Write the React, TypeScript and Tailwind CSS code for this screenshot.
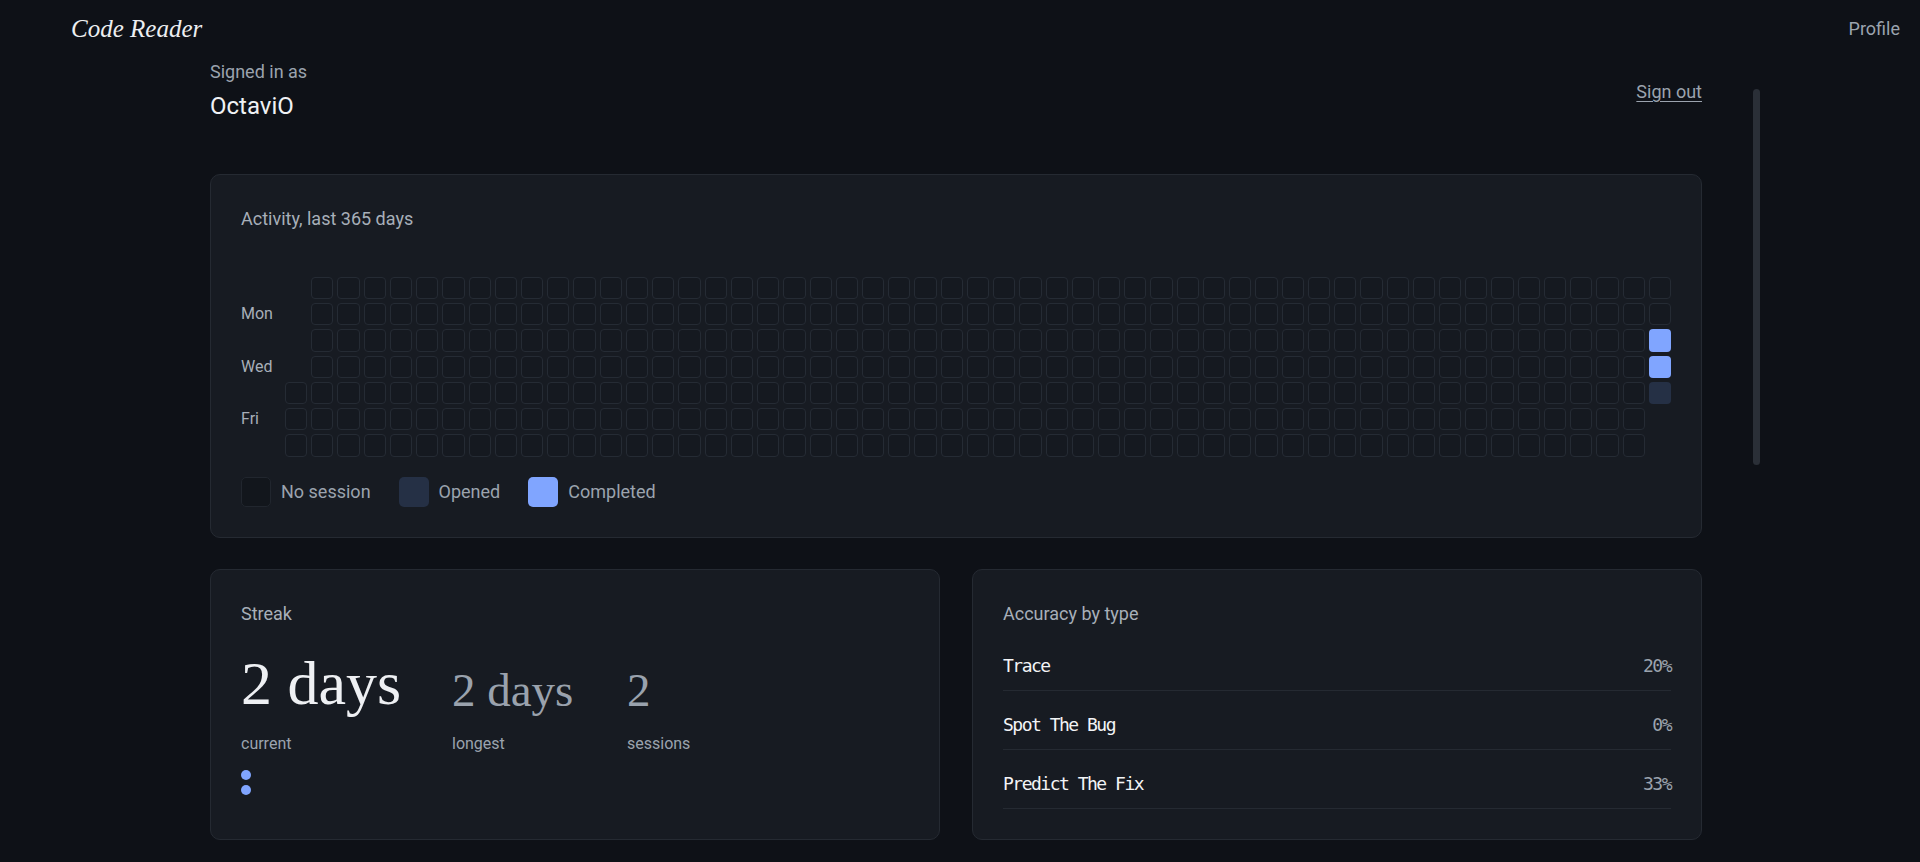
import React from 'react';

const WEEKS = 53;
const DAYS = ['', 'Mon', '', 'Wed', '', 'Fri', ''];

type Status = 'none' | 'opened' | 'completed' | 'blank';

function cellStatus(week: number, day: number): Status {
  if (week === 0 && day < 4) return 'blank';
  if (week === WEEKS - 1) {
    if (day > 4) return 'blank';
    if (day === 2 || day === 3) return 'completed';
    if (day === 4) return 'opened';
  }
  return 'none';
}

function Cell({ status }: { status: Status }) {
  if (status === 'blank') return <div className="aspect-square" />;
  if (status === 'completed') return <div className="aspect-square rounded-[4px] bg-[#80a5ff]" />;
  if (status === 'opened') return <div className="aspect-square rounded-[4px] bg-[#253045]" />;
  return <div className="aspect-square rounded-[4px] border-[1.5px] border-[#252b34] bg-[#151920]" />;
}

const accuracy = [
  { label: 'Trace', value: '20%' },
  { label: 'Spot The Bug', value: '0%' },
  { label: 'Predict The Fix', value: '33%' },
];

export default function App() {
  return (
    <div className="min-h-screen bg-[#0e1117] text-[#e6e8eb] font-['Roboto','Noto_Sans',sans-serif]">
      {/* Header */}
      <header className="flex h-[58px] items-center justify-between pl-[71px] pr-[20px]">
        <span className="font-['Liberation_Serif',serif] text-[25px] italic text-[#eceef1]">Code Reader</span>
        <a className="text-lg text-[#9ba3ae]">Profile</a>
      </header>

      <div className="flex">
        <main className="ml-[210px] w-[1492px] pb-10">
          {/* Account */}
          <div className="flex items-center justify-between">
            <div>
              <p className="text-lg leading-7 text-[#9ba3ae]">Signed in as</p>
              <p className="mt-1 text-2xl leading-8 text-[#f0f2f5]">OctaviO</p>
            </div>
            <a className="mt-[4px] text-lg text-[#9ba3ae] underline underline-offset-[3px]">Sign out</a>
          </div>

          {/* Activity */}
          <section className="mt-[52px] rounded-[10px] border border-[#252a32] bg-[#171b22] p-[30px]">
            <h2 className="text-lg leading-7 text-[#a7afb9]">Activity, last 365 days</h2>
            <div className="mt-[44px] grid grid-cols-[40px_repeat(53,minmax(0,1fr))] gap-1">
              {DAYS.map((label, day) => (
                <React.Fragment key={day}>
                  <div className="flex h-0 min-h-full items-center text-base leading-4 text-[#a7afb9]">{label}</div>
                  {Array.from({ length: WEEKS }, (_, week) => (
                    <Cell key={week} status={cellStatus(week, day)} />
                  ))}
                </React.Fragment>
              ))}
            </div>
            <div className="mt-5 flex items-center gap-[28px] text-lg text-[#9ba3ae]">
              <div className="flex items-center gap-[10px]">
                <span className="h-[30px] w-[30px] rounded-[5px] border border-[#21262e] bg-[#12161c]" />
                No session
              </div>
              <div className="flex items-center gap-[10px]">
                <span className="h-[30px] w-[30px] rounded-[5px] bg-[#253045]" />
                Opened
              </div>
              <div className="flex items-center gap-[10px]">
                <span className="h-[30px] w-[30px] rounded-[5px] bg-[#80a5ff]" />
                Completed
              </div>
            </div>
          </section>

          <div className="mt-[31px] grid grid-cols-2 gap-8">
            {/* Streak */}
            <section className="rounded-[10px] border border-[#252a32] bg-[#171b22] p-[30px]">
              <h2 className="text-lg leading-7 text-[#a7afb9]">Streak</h2>
              <div className="mt-[24px] flex items-end">
                <div className="w-[211px]">
                  <div className="font-['Liberation_Serif',serif] text-[62px] leading-none text-[#eef0f3]">2 days</div>
                  <div className="mt-[18px] text-base text-[#9ba3ae]">current</div>
                </div>
                <div className="w-[175px]">
                  <div className="font-['Liberation_Serif',serif] text-[47px] leading-none text-[#9aa2ad]">2 days</div>
                  <div className="mt-[18px] text-base text-[#9ba3ae]">longest</div>
                </div>
                <div>
                  <div className="font-['Liberation_Serif',serif] text-[47px] leading-none text-[#9aa2ad]">2</div>
                  <div className="mt-[18px] text-base text-[#9ba3ae]">sessions</div>
                </div>
              </div>
              <div className="mt-[14px] flex flex-col gap-[5px]">
                <span className="h-[10px] w-[10px] rounded-full bg-[#80a5ff]" />
                <span className="h-[10px] w-[10px] rounded-full bg-[#80a5ff]" />
              </div>
            </section>

            {/* Accuracy */}
            <section className="rounded-[10px] border border-[#252a32] bg-[#171b22] p-[30px]">
              <h2 className="text-lg leading-7 text-[#a7afb9]">Accuracy by type</h2>
              <ul className="mt-[4px]">
                {accuracy.map((row) => (
                  <li
                    key={row.label}
                    className="flex items-center justify-between border-b border-[#252a32] pt-[22px] pb-[12px] font-['DejaVu_Sans_Mono',monospace] text-[18px] leading-6 tracking-[-1.5px]"
                  >
                    <span className="text-[#f3f4f6]">{row.label}</span>
                    <span className="text-[#9ba3ae]">{row.value}</span>
                  </li>
                ))}
              </ul>
            </section>
          </div>
        </main>

        {/* scroll thumb */}
        <div className="ml-[51px] mt-[31px] h-[376px] w-[7px] rounded-sm bg-[#2a2f37]" />
      </div>
    </div>
  );
}
